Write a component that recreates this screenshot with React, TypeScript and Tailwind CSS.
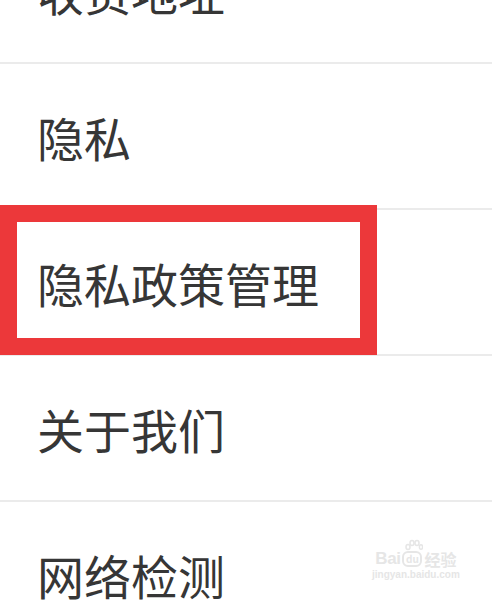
import React from 'react';

const items = ['收货地址', '隐私', '隐私政策管理', '关于我们', '网络检测'];

const Row: React.FC<{ label: string }> = ({ label }) => (
  <div className="h-[146px] shrink-0 flex items-center pl-[37px] border-b-2 border-[#ebebeb]">
    <span className="text-[47px] leading-none text-[#363636]">{label}</span>
  </div>
);

export default function App() {
  return (
    <div
      className="relative w-[492px] h-[601px] overflow-hidden bg-white"
      style={{ fontFamily: '"Noto Sans CJK SC", "Noto Sans", sans-serif' }}
    >
      <div className="-mt-[82px] flex flex-col">
        {items.map((label) => (
          <Row key={label} label={label} />
        ))}
      </div>

      {/* highlight annotation */}
      <div className="absolute left-0 top-[205px] w-[377px] h-[150px] border-[17px] border-[#ec383a]" />

      {/* watermark */}
      <div className="absolute left-[372px] top-[550px] flex flex-col items-center text-[#e6e6e6]">
        <div className="flex items-end gap-[2px] leading-none">
          <span className="text-[17px] font-bold tracking-tight" style={{ fontFamily: '"Liberation Sans", sans-serif' }}>Bai</span>
          <span className="relative flex items-center justify-center w-[20px] h-[16px] rounded-[6px] border-2 border-[#e6e6e6] text-[10px] font-bold">
            <svg className="absolute -top-[14px] left-[1px]" width="18" height="14" viewBox="0 0 18 14" fill="none" stroke="#e6e6e6" strokeWidth="1.5">
              <ellipse cx="3" cy="8" rx="2" ry="2.5" />
              <ellipse cx="7" cy="4" rx="2" ry="2.5" />
              <ellipse cx="12" cy="4" rx="2" ry="2.5" />
              <ellipse cx="16" cy="8" rx="1.6" ry="2.3" />
            </svg>
            du
          </span>
          <span className="text-[16px] font-bold">经验</span>
        </div>
        <span className="mt-[3px] text-[10px] font-bold leading-none" style={{ fontFamily: '"Liberation Sans", sans-serif' }}>
          jingyan.baidu.com
        </span>
      </div>
    </div>
  );
}
